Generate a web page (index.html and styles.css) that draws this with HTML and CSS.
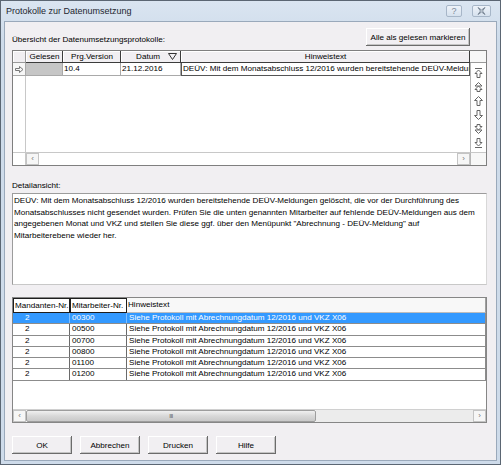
FILE: index.html
```html
<!DOCTYPE html>
<html lang="de">
<head>
    <meta charset="UTF-8">
    <title>Protokolle zur Datenumsetzung</title>
    <link rel="stylesheet" href="styles.css">
</head>
<body>
    <div class="window">
        <div class="titlebar">
            <span class="title">Protokolle zur Datenumsetzung</span>
            <div class="caption-buttons">
                <span class="caption-btn">?</span>
                <span class="caption-btn close-btn">
                    <svg width="9" height="8" viewBox="0 0 9 8"><path d="M1 0.5 L4.5 3 L8 0.5 M1 7.5 L4.5 5 L8 7.5 M1 0.5 L3.5 4 L1 7.5 M8 0.5 L5.5 4 L8 7.5" fill="none" stroke="#7d8a99" stroke-width="1"/></svg>
                </span>
            </div>
        </div>

        <div class="client">
            <div class="overview-bar">
                <span class="caption">Übersicht der Datenumsetzungsprotokolle:</span>
                <button class="btn btn-wide">Alle als gelesen markieren</button>
            </div>

            <!-- Protokolle -->
            <div class="protocol-grid">
                <div class="hcell ind-head"></div>
                <div class="hcell">Gelesen</div>
                <div class="hcell">Prg.Version</div>
                <div class="hcell sort-head">Datum
                    <svg class="sort-icon" width="9" height="7" viewBox="0 0 9 7"><path d="M0.5 0.5 H8.5 L4.5 6.5 Z" fill="none" stroke="#333" stroke-width="1"/></svg>
                </div>
                <div class="hcell">Hinweistext</div>
                <div class="hcell nav-head"></div>

                <div class="cell ind-cell">
                    <svg width="9" height="7" viewBox="0 0 9 7"><path d="M0.5 2.5 H4.5 V0.5 L8 3.5 L4.5 6.5 V4.5 H0.5 Z" fill="none" stroke="#777" stroke-width="1"/></svg>
                </div>
                <div class="cell cell-grey"></div>
                <div class="cell">10.4</div>
                <div class="cell">21.12.2016</div>
                <div class="cell cell-focus">DEÜV: Mit dem Monatsabschluss 12/2016 wurden bereitstehende DEÜV-Meldungen gelöscht</div>

                <div class="nav-col">
                    <span class="nav-btn"><svg width="9" height="10" viewBox="0 0 9 10"><path d="M1 0.5 H8 M4.5 2 L8 5.5 H6 V9.5 H3 V5.5 H1 Z" fill="#fff" stroke="#666"/></svg></span>
                    <span class="nav-btn"><svg width="9" height="10" viewBox="0 0 9 10"><path d="M4.5 0.5 L8 4 H1 Z M4.5 4 L8 7.5 H6 V9.5 H3 V7.5 H1 Z" fill="#fff" stroke="#666"/></svg></span>
                    <span class="nav-btn"><svg width="9" height="10" viewBox="0 0 9 10"><path d="M4.5 0.5 L8.5 4.5 H6 V9.5 H3 V4.5 H0.5 Z" fill="#fff" stroke="#666"/></svg></span>
                    <span class="nav-btn"><svg width="9" height="10" viewBox="0 0 9 10"><path d="M4.5 9.5 L8.5 5.5 H6 V0.5 H3 V5.5 H0.5 Z" fill="#fff" stroke="#666"/></svg></span>
                    <span class="nav-btn"><svg width="9" height="10" viewBox="0 0 9 10"><path d="M4.5 9.5 L8 6 H1 Z M4.5 6 L8 2.5 H6 V0.5 H3 V2.5 H1 Z" fill="#fff" stroke="#666"/></svg></span>
                    <span class="nav-btn"><svg width="9" height="10" viewBox="0 0 9 10"><path d="M1 9.5 H8 M4.5 8 L8 4.5 H6 V0.5 H3 V4.5 H1 Z" fill="#fff" stroke="#666"/></svg></span>
                </div>

                <div class="ind-rest"></div>
                <div class="empty-area"></div>

                <div class="scroll-corner"></div>
                <div class="hscroll hscroll-plain">
                    <span class="scroll-arrow">‹</span>
                    <span class="scroll-track"></span>
                    <span class="scroll-arrow">›</span>
                </div>
                <div class="scroll-corner nav-corner"></div>
            </div>

            <span class="caption detail-caption">Detailansicht:</span>
            <div class="detail">DEÜV: Mit dem Monatsabschluss 12/2016 wurden bereitstehende DEÜV-Meldungen gelöscht, die vor der Durchführung des<br>Monatsabschlusses nicht gesendet wurden. Prüfen Sie die unten genannten Mitarbeiter auf fehlende DEÜV-Meldungen aus dem<br>angegebenen Monat und VKZ und stellen Sie diese ggf. über den Menüpunkt "Abrechnung - DEÜV-Meldung" auf<br>Mitarbeiterebene wieder her.</div>

            <!-- Mitarbeiter -->
            <div class="employee-grid">
                <div class="emp-head">
                    <span class="emp-hcell boxed">Mandanten-Nr.</span>
                    <span class="emp-hcell boxed">Mitarbeiter-Nr.</span>
                    <span class="emp-hcell">Hinweistext</span>
                </div>
                <div class="emp-row selected"><span>2</span><span>00300</span><span>Siehe Protokoll mit Abrechnungdatum 12/2016 und VKZ X06</span></div>
                <div class="emp-row"><span>2</span><span>00500</span><span>Siehe Protokoll mit Abrechnungdatum 12/2016 und VKZ X06</span></div>
                <div class="emp-row"><span>2</span><span>00700</span><span>Siehe Protokoll mit Abrechnungdatum 12/2016 und VKZ X06</span></div>
                <div class="emp-row"><span>2</span><span>00800</span><span>Siehe Protokoll mit Abrechnungdatum 12/2016 und VKZ X06</span></div>
                <div class="emp-row"><span>2</span><span>01100</span><span>Siehe Protokoll mit Abrechnungdatum 12/2016 und VKZ X06</span></div>
                <div class="emp-row"><span>2</span><span>01200</span><span>Siehe Protokoll mit Abrechnungdatum 12/2016 und VKZ X06</span></div>
                <div class="emp-fill"></div>
                <div class="hscroll">
                    <span class="scroll-arrow">‹</span>
                    <span class="scroll-thumb">III</span>
                    <span class="scroll-track grey"></span>
                    <span class="scroll-arrow">›</span>
                </div>
            </div>

            <div class="button-row">
                <button class="btn">OK</button>
                <button class="btn">Abbrechen</button>
                <button class="btn">Drucken</button>
                <button class="btn">Hilfe</button>
            </div>
        </div>
    </div>
</body>
</html>
```

FILE: styles.css
```css
:root {
    --face: #f1eff2;
    --frame: #cedbea;
    --grid-line: #a9a9a9;
    --dark-line: #3c3c3c;
    --select: #3399ff;
}

* {
    box-sizing: border-box;
    margin: 0;
    padding: 0;
}

body {
    font-family: 'Liberation Sans', Arial, sans-serif;
    font-size: 8.1px;
    color: #000;
    background: #fff;
}

.window {
    width: 501px;
    height: 465px;
    border: 1px solid #5b6673;
    background: linear-gradient(to bottom, #dae5f1, var(--frame) 40px);
    display: flex;
    flex-direction: column;
}

.titlebar {
    height: 20px;
    display: flex;
    align-items: center;
    justify-content: space-between;
    padding: 0 9px 0 5px;
}

.title {
    font-size: 9px;
    color: #1e2630;
}

.caption-buttons {
    display: flex;
    gap: 10px;
    margin-top: -1px;
}

.caption-btn {
    width: 16px;
    height: 12px;
    border: 1px solid #a7b6c8;
    border-radius: 2px;
    background: linear-gradient(to bottom, #eef3f9, #d6e1ee);
    display: flex;
    align-items: center;
    justify-content: center;
    font-size: 9px;
    color: #7d8a99;
}

.close-btn {
    width: 19px;
}

.client {
    flex: 1;
    margin: 0 3px 3px;
    border: 1px solid #9aa9bb;
    background: var(--face);
    padding: 6px 9px 6px 7px;
    display: flex;
    flex-direction: column;
}

.overview-bar {
    height: 18px;
    display: flex;
    justify-content: space-between;
    align-items: flex-end;
    margin-bottom: 4px;
}

.overview-bar .caption {
    margin-bottom: 1px;
}

.caption {
    line-height: 10px;
}

/* Buttons */
.btn {
    font-family: inherit;
    font-size: 8.1px;
    width: 60px;
    height: 18px;
    background: var(--face);
    border: none;
    box-shadow: inset -1px -1px 0 #6b6b6b, inset 1px 1px 0 #fff, inset -2px -2px 0 #c4c4c4;
    color: #000;
}

.btn-wide {
    width: 104px;
    margin-right: 17px;
}

/* Protokoll grid */
.protocol-grid {
    height: 116px;
    border: 1px solid #7f7f7f;
    background: #fff;
    display: grid;
    grid-template-columns: 13px 37px 58px 60px 1fr 16px;
    grid-template-rows: 12px 13px 1fr 13px;
}

.hcell {
    background: var(--face);
    box-shadow: inset -1px -1px 0 var(--dark-line), inset 1px 1px 0 #fff;
    display: flex;
    align-items: center;
    justify-content: center;
    line-height: 10px;
    white-space: nowrap;
}

.ind-head {
    box-shadow: inset -1px -1px 0 #9a9a9a, inset 1px 1px 0 #fff;
}

.sort-head {
    position: relative;
    padding-right: 6px;
}

.sort-icon {
    position: absolute;
    right: 4px;
    top: 2px;
}

.nav-head {
    box-shadow: inset 0 -1px 0 #9a9a9a;
    background: #f7f7f7;
}

.cell {
    border-right: 1px solid var(--grid-line);
    border-bottom: 1px solid var(--grid-line);
    padding-left: 1px;
    line-height: 12px;
    white-space: nowrap;
    overflow: hidden;
}

.ind-cell {
    background: #f7f7f7;
    display: flex;
    align-items: center;
    justify-content: center;
}

.cell-grey {
    background: #c6c6c6;
}

.cell-focus {
    border: 1px solid #555;
    border-top: none;
    line-height: 11px;
}

.nav-col {
    grid-column: 6;
    grid-row: 2 / 4;
    border-left: 1px solid #b5b5b5;
    padding-top: 3px;
    display: flex;
    flex-direction: column;
    align-items: center;
}

.nav-btn {
    width: 13px;
    height: 14px;
    display: flex;
    align-items: center;
    justify-content: center;
}

.ind-rest {
    grid-column: 1;
    grid-row: 3;
    border-right: 1px solid #c8c8c8;
}

.empty-area {
    grid-column: 2 / 6;
    grid-row: 3;
}

.scroll-corner {
    border-top: 1px solid #c8c8c8;
    border-right: 1px solid #c8c8c8;
}

.nav-corner {
    border-right: none;
    border-left: 1px solid #b5b5b5;
    background: #f7f7f7;
}

.hscroll {
    height: 13px;
    display: flex;
    border-top: 1px solid #c8c8c8;
    background: #fff;
}

.hscroll-plain {
    grid-column: 2 / 6;
}

.scroll-arrow {
    width: 13px;
    border: 1px solid #c4c4c4;
    background: #f6f6f6;
    font-size: 8px;
    line-height: 10px;
    text-align: center;
    color: #777;
}

.scroll-track {
    flex: 1;
}

.scroll-track.grey {
    background: #ececec;
}

.scroll-thumb {
    width: 290px;
    border: 1px solid #9d9d9d;
    border-radius: 2px;
    background: linear-gradient(to bottom, #f0f0f0, #d8d8d8 50%, #c9c9c9);
    font-size: 6px;
    line-height: 11px;
    text-align: center;
    color: #555;
    letter-spacing: -0.5px;
}

/* Detailansicht */
.detail-caption {
    margin-top: 15px;
    height: 10px;
    margin-bottom: 2px;
}

.detail {
    height: 92px;
    background: #fff;
    border: 1px solid #9c9c9c;
    border-right-color: #d8d8d8;
    border-bottom-color: #c8c8c8;
    padding: 1px 1px;
    line-height: 11.6px;
    white-space: nowrap;
    overflow: hidden;
}

/* Mitarbeiter grid */
.employee-grid {
    margin-top: 12px;
    height: 126px;
    border: 1px solid #868686;
    background: #fff;
    display: flex;
    flex-direction: column;
}

.emp-head {
    height: 15px;
    display: grid;
    grid-template-columns: 57px 57px 1fr;
    background: #f8f8f8;
    border-bottom: 1px solid #bdbdbd;
    border-right: 1px solid #a0a0a0;
}

.emp-hcell {
    padding-left: 1px;
    line-height: 13px;
    white-space: nowrap;
}

.emp-hcell.boxed {
    border: 1px solid #1e1e1e;
    background: #fff;
}

.emp-row {
    height: 11.3px;
    display: grid;
    grid-template-columns: 57px 57px 1fr;
    border-bottom: 1px solid #8c8c8c;
    border-right: 1px solid #8c8c8c;
    line-height: 10px;
    white-space: nowrap;
}

.emp-row span {
    border-right: 1px solid #6a6a6a;
    padding-left: 2px;
}

.emp-row span:first-child {
    padding-left: 12px;
}

.emp-row span:last-child {
    border-right: none;
}

.emp-row.selected {
    background: var(--select);
    color: #fff;
}

.emp-row.selected span {
    border-right-color: #7fbfff;
}

.emp-fill {
    flex: 1;
}

.employee-grid .hscroll {
    border-top: 1px solid #d0d0d0;
}

/* Button row */
.button-row {
    margin-top: 13px;
    display: flex;
    gap: 8px;
}
```
